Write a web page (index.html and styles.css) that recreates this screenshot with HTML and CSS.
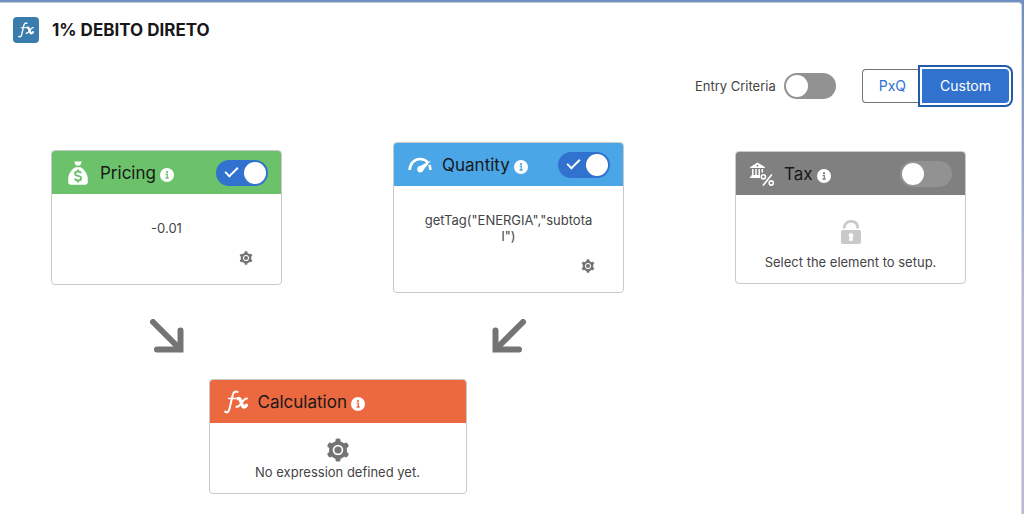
FILE: index.html
```html
<!DOCTYPE html>
<html lang="en">
<head>
    <meta charset="UTF-8">
    <meta name="viewport" content="width=device-width, initial-scale=1.0">
    <title>1% DEBITO DIRETO</title>
    <link rel="stylesheet" href="styles.css">
</head>
<body>
    <!-- shared icons -->
    <svg class="sprite" aria-hidden="true">
        <symbol id="gear" viewBox="0 0 24 24">
            <g fill="currentColor">
                <rect x="9.5" y="0.5" width="5" height="6" rx="1.5"/>
                <rect x="9.5" y="0.5" width="5" height="6" rx="1.5" transform="rotate(60 12 12)"/>
                <rect x="9.5" y="0.5" width="5" height="6" rx="1.5" transform="rotate(120 12 12)"/>
                <rect x="9.5" y="0.5" width="5" height="6" rx="1.5" transform="rotate(180 12 12)"/>
                <rect x="9.5" y="0.5" width="5" height="6" rx="1.5" transform="rotate(240 12 12)"/>
                <rect x="9.5" y="0.5" width="5" height="6" rx="1.5" transform="rotate(300 12 12)"/>
                <circle cx="12" cy="12" r="3.6"/>
            </g>
            <circle cx="12" cy="12" r="7.2" fill="none" stroke="currentColor" stroke-width="3.8"/>
        </symbol>
        <symbol id="info" viewBox="0 0 14 14">
            <circle cx="7" cy="7" r="7" fill="#fff"/>
            <circle cx="7" cy="4.2" r="1.1" fill="currentColor"/>
            <path d="M5.700 6.400h1.600v3.400M5.500 10h3.200" fill="none" stroke="currentColor" stroke-width="1.300"/>
        </symbol>
        <symbol id="fx" viewBox="0 0 24 24">
            <g fill="none" stroke="currentColor" stroke-linecap="round">
                <path d="M1.2 21.6c2.2 1.6 3.6.1 4.3-2.8L8.6 5.6C9.3 2.300 10.900.800 13.500 1.900" stroke-width="2"/>
                <path d="M4.6 8.6h7.2" stroke-width="1.5"/>
                <path d="M14 8.500c3.600-1.200 3.200 8.800 6 8.500 1.100 0 1.900-.8 2.500-1.700" stroke-width="3.400"/>
                <path d="M22.800 8.500c-3.800-.8-6.200 9-10.300 8.300" stroke-width="2.100"/>
            </g>
        </symbol>
    </svg>

    <main class="panel">
        <header class="panel-header">
            <span class="app-icon"><svg class="icon-app"><use href="#fx"/></svg></span>
            <h1>1% DEBITO DIRETO</h1>
        </header>

        <div class="toolbar">
            <label class="criteria" for="entry-criteria">Entry Criteria</label>
            <input type="checkbox" role="switch" class="switch" id="entry-criteria">
            <div class="button-group">
                <button type="button" class="btn">PxQ</button>
                <button type="button" class="btn btn-active">Custom</button>
            </div>
        </div>

        <div class="board">
            <section class="card pricing">
                <div class="card-header">
                    <svg class="icon-head" viewBox="0 0 24 24">
                        <path d="M8.2.4h7.6L14.2 4.6H9.8z" fill="#fff"/>
                        <path d="M9.4 6.2h5.2c4.5 2.8 7.2 7 7.2 12v2.6c0 1.9-1.1 3-3 3H5.2c-1.9 0-3-1.1-3-3v-2.6c0-5 2.7-9.2 7.2-12z" fill="#fff"/>
                        <path d="M15 12.2c-.6-1.2-1.700-1.700-3-1.700-1.700 0-2.900.8-2.900 2.200 0 3 6 1.400 6 4.500 0 1.500-1.300 2.300-3.100 2.300-1.500 0-2.700-.6-3.200-1.900M12 8.600v2M12 19.400v2.200" fill="none" stroke="currentColor" stroke-width="1.900"/>
                    </svg>
                    <label for="pricing-on">Pricing</label>
                    <svg class="icon-info"><use href="#info"/></svg>
                    <input type="checkbox" role="switch" class="switch" id="pricing-on" checked>
                </div>
                <div class="card-body">
                    <p>-0.01</p>
                    <button type="button" class="setup" aria-label="Pricing setup"><svg class="icon-gear"><use href="#gear"/></svg></button>
                </div>
            </section>

            <section class="card quantity">
                <div class="card-header">
                    <svg class="icon-head" viewBox="0 0 24 24">
                        <path d="M1.600 17C2 10.500 6.300 6 12 6c3.200 0 5.800 1.300 7.600 3.300M21.300 12c.7 1.500 1 3.200 1.100 5" fill="none" stroke="#fff" stroke-width="2.700"/>
                        <path d="M23 7.6 15.600 16.800a3.200 3.200 0 1 1-3.400-3.800z" fill="#fff"/>
                    </svg>
                    <label for="quantity-on">Quantity</label>
                    <svg class="icon-info"><use href="#info"/></svg>
                    <input type="checkbox" role="switch" class="switch" id="quantity-on" checked>
                </div>
                <div class="card-body">
                    <p>getTag("ENERGIA","subtotal")</p>
                    <button type="button" class="setup" aria-label="Quantity setup"><svg class="icon-gear"><use href="#gear"/></svg></button>
                </div>
            </section>

            <section class="card tax">
                <div class="card-header">
                    <svg class="icon-head" viewBox="0 0 24 24">
                        <path d="M0 5.200 7.500.4 15 5.200v.9H0z" fill="#fff"/>
                        <circle cx="7.5" cy="3.700" r=".9" fill="currentColor"/>
                        <path d="M2.800 7v6.200M6 7v6.200M9.200 7v6.200M12.300 7v3.600M1.400 13.700H10M0 15.300h10" fill="none" stroke="#fff" stroke-width="1.500"/>
                        <g fill="none" stroke="#fff" stroke-width="1.600">
                            <circle cx="13.400" cy="14.800" r="2.100"/>
                            <circle cx="21.300" cy="21" r="2.100"/>
                            <path d="M21.800 12.400 13 23.600"/>
                        </g>
                    </svg>
                    <label for="tax-on">Tax</label>
                    <svg class="icon-info"><use href="#info"/></svg>
                    <input type="checkbox" role="switch" class="switch" id="tax-on">
                </div>
                <div class="card-body empty">
                    <svg class="icon-body" viewBox="0 0 24 24">
                        <path d="M5.200 8.500C5.200 3.800 8 1.400 12 1.400s6.800 2.400 6.800 7.100" fill="none" stroke="#c9c9c9" stroke-width="2.700"/>
                        <rect x="2" y="10" width="20" height="14" rx="1.800" fill="#c9c9c9"/>
                        <path d="M12 13a2.400 2.400 0 0 1 1.400 4.300l.8 3.500H9.800l.8-3.500A2.400 2.400 0 0 1 12 13z" fill="#fff"/>
                    </svg>
                    <p>Select the element to setup.</p>
                </div>
            </section>

            <svg class="arrow" viewBox="0 0 34 34">
                <path d="M3 3 30 30"/>
                <path d="M30.500 11.500v19H7"/>
            </svg>
            <svg class="arrow" viewBox="0 0 34 34">
                <path d="M31 3 4 30"/>
                <path d="M3.500 11.500v19H27"/>
            </svg>

            <section class="card calculation">
                <div class="card-header">
                    <svg class="icon-head white"><use href="#fx"/></svg>
                    <h2>Calculation</h2>
                    <svg class="icon-info"><use href="#info"/></svg>
                </div>
                <div class="card-body empty">
                    <button type="button" class="setup" aria-label="Calculation setup"><svg class="icon-body"><use href="#gear"/></svg></button>
                    <p>No expression defined yet.</p>
                </div>
            </section>
        </div>
    </main>
</body>
</html>
```

FILE: styles.css
```css
* {
    box-sizing: border-box;
}

body {
    margin: 0;
    padding: 2px 2px 0 0;
    min-height: 100vh;
    font-family: Inter, "Liberation Sans", sans-serif;
    font-size: 13px;
    line-height: 16px;
    color: #444;
    background: linear-gradient(#6d8fc2, #b9b9d8 300px);
}

h1, h2, p {
    margin: 0;
}

button {
    font: inherit;
    cursor: pointer;
}

.sprite {
    display: none;
}

.panel {
    min-height: calc(100vh - 2px);
    background-color: #fff;
    border-top: 1px solid #c4c9d0;
    border-right: 1px solid #d8d8dc;
    border-top-right-radius: 4px;
}

.panel-header {
    display: flex;
    align-items: center;
    gap: 13px;
    padding: 14px 13px 0;
}

.panel-header h1 {
    font-size: 17px;
    line-height: 24px;
    font-weight: 700;
    color: #181818;
}

.app-icon {
    display: flex;
    align-items: center;
    justify-content: center;
    width: 26px;
    height: 26px;
    border-radius: 4px;
    background-color: #3a7dad;
    color: #fff;
}

.icon-app {
    width: 16px;
    height: 16px;
}

/* toolbar */
.toolbar {
    display: flex;
    align-items: center;
    justify-content: flex-end;
    padding: 26px 12px 0 0;
}

.criteria {
    margin-right: 8px;
}

.button-group {
    display: flex;
    margin-left: 26px;
}

.btn {
    height: 34px;
    padding: 0 16px;
    border: 1px solid #747474;
    border-right: 0;
    border-radius: 4px 0 0 4px;
    background-color: #fff;
    color: #2e72cf;
    font-size: 14px;
}

.btn-active {
    padding: 0 18px;
    border: 0;
    border-radius: 0 4px 4px 0;
    background-color: #3072cd;
    color: #fff;
    box-shadow: 0 0 0 2px #fff, 0 0 0 4px #235aa9;
}

/* switches */
.switch {
    appearance: none;
    display: flex;
    align-items: center;
    width: 52px;
    height: 26px;
    margin: 0;
    padding: 0 2px;
    border-radius: 13px;
    background-color: #929292;
    cursor: pointer;
}

.switch::before {
    content: "";
    width: 22px;
    height: 22px;
    border-radius: 50%;
    background-color: #fff;
}

.switch:checked {
    flex-direction: row-reverse;
    justify-content: space-between;
    background-color: #3072cd;
}

.switch:checked::after {
    content: "";
    box-sizing: border-box;
    width: 13px;
    height: 7px;
    margin: 0 0 4px 7px;
    border-left: 2px solid #fff;
    border-bottom: 2px solid #fff;
    transform: rotate(-45deg);
}

/* board */
.board {
    display: grid;
    grid-template-columns: repeat(3, 1fr);
    column-gap: 111px;
    row-gap: 26px;
    align-items: center;
    justify-items: center;
    padding: 39px 55px 19px 51px;
}

.card {
    width: 100%;
    border: 1px solid #c9c9c9;
    border-radius: 4px;
    background-color: #fff;
    overflow: hidden;
}

.card-header {
    display: flex;
    align-items: center;
    height: 43px;
    padding: 0 13px 0 14px;
}

.card-header label,
.card-header h2 {
    margin: 0 4px 0 10px;
    font-size: 17px;
    line-height: 24px;
    font-weight: 400;
    color: #181818;
}

.card-header .switch {
    margin-left: auto;
}

.card-body {
    display: flex;
    flex-direction: column;
    padding: 26px 28px 19px;
    text-align: center;
}

.card-body p {
    word-break: break-all;
}

.setup {
    display: flex;
    align-self: flex-end;
    margin-top: 15px;
    padding: 0;
    border: 0;
    background: none;
    color: #747474;
}

.empty {
    align-items: center;
    gap: 10px;
    padding: 25px 12px 13px;
}

.empty p {
    word-break: normal;
}

.empty .setup {
    align-self: center;
    margin-top: 0;
}

.pricing .card-header {
    background-color: #6cc26a;
    color: #6cc26a;
}

.quantity .card-header {
    background-color: #4ba6e7;
    color: #4ba6e7;
}

.tax .card-header {
    background-color: #808080;
    color: #808080;
}

.calculation {
    grid-column: 1 / 3;
    max-width: 258px;
}

.calculation .card-header {
    background-color: #ec6940;
    color: #ec6940;
}

.calculation .card-body {
    gap: 2px;
    padding-top: 15px;
}

.icon-head,
.icon-body {
    width: 24px;
    height: 24px;
}

.white {
    color: #fff;
}

.icon-info {
    width: 14px;
    height: 14px;
    margin-top: 4px;
}

.icon-gear {
    width: 14px;
    height: 14px;
}

.arrow {
    width: 34px;
    height: 34px;
    fill: none;
    stroke: #747474;
    stroke-width: 6;
    stroke-linecap: round;
    stroke-linejoin: miter;
}

.arrow + .arrow {
    grid-column: 2;
}

@media (max-width: 768px) {
    .board {
        column-gap: 24px;
        padding-left: 16px;
        padding-right: 16px;
    }
}
```
